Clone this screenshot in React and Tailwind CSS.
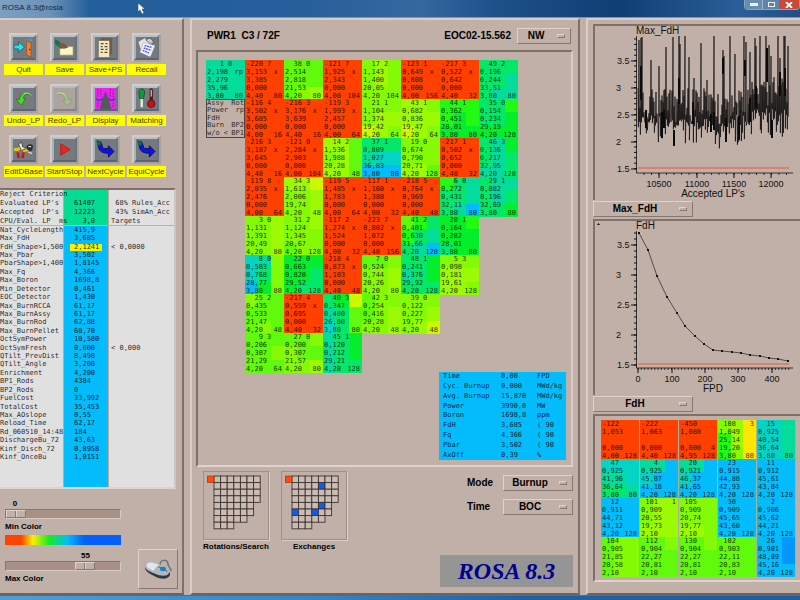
import React, { useState } from 'react';
import clsx from 'clsx';

// Colour scale of the core maps, hot to cold
const SCALE = {
  R: 'bg-[#ff4000]',
  f: 'bg-[#ffe600]',
  y: 'bg-[#ccf800]',
  l: 'bg-[#9cfa04]',
  m: 'bg-[#84fa06]',
  g: 'bg-[#62fa0c]',
  G: 'bg-[#22fa14]',
  e: 'bg-[#04ee2c]',
  E: 'bg-[#04e86a]',
  t: 'bg-[#04dc9c]',
  c: 'bg-[#04d4c4]',
  b: 'bg-[#04bcfc]',
  B: 'bg-[#0498fc]',
};

// [id, rotation, power, flag, FdH, burnup, enrichment, rods, 3x3 colours]
const CORE = [
  [
    ['1', '0', '2,198', 'rp', '2,279', '35,96', '3,80', '80', 't'],
    ['-220', '7', '3,153', 'x', '3,385', '0,000', '4,40', '80', 'R'],
    ['38', '0', '2,514', '', '2,818', '21,53', '4,20', '80', 'gggggggml'],
    ['-121', '7', '1,925', 'x', '2,343', '0,000', '4,00', '104', 'R'],
    ['17', '2', '1,143', '', '1,400', '20,05', '4,20', '104', 'mlmmlmmmm'],
    ['-123', '1', '0,649', 'x', '0,808', '0,000', '4,00', '156', 'R'],
    ['-217', '3', '0,522', 'x', '0,642', '0,000', '4,40', '32', 'R'],
    ['49', '2', '0,196', '', '0,244', '33,51', '3,80', '80', 'EEEEEtEtt'],
  ],
  [
    'legend',
    ['-116', '4', '3,502', 'x', '3,685', '0,000', '4,00', '16', 'R'],
    ['-216', '3', '3,176', 'x', '3,639', '0,000', '4,40', '16', 'R'],
    ['-119', '3', '1,993', 'x', '2,457', '0,000', '4,00', '64', 'R'],
    ['21', '1', '1,104', '', '1,374', '19,42', '4,20', '64', 'mmmmllylm'],
    ['43', '1', '0,682', '', '0,836', '19,47', '4,20', '64', 'llmlllylm'],
    ['44', '1', '0,362', '', '0,451', '28,01', '3,80', '80', 'GGGGeGeee'],
    ['35', '0', '0,154', '', '0,234', '29,19', '4,20', '128', 'EEGEEeeee'],
  ],
  [
    null,
    ['-216', '3', '3,187', 'x', '3,645', '0,000', '4,40', '16', 'R'],
    ['-121', '0', '2,284', 'x', '2,903', '0,000', '4,00', '104', 'R'],
    ['14', '2', '1,536', '', '1,988', '20,28', '4,20', '48', 'llgmlgllg'],
    ['37', '1', '0,809', '', '1,027', '36,83', '3,80', '80', 'EEEtccbbb'],
    ['19', '0', '0,674', '', '0,790', '20,71', '4,20', '128', 'mmmmmmllg'],
    ['-217', '1', '0,502', 'x', '0,652', '0,000', '4,40', '32', 'R'],
    ['46', '3', '0,136', '', '0,217', '32,95', '4,20', '128', 'EteEtEttE'],
  ],
  [
    null,
    ['-119', '8', '2,035', 'x', '2,476', '0,000', '4,00', '64', 'R'],
    ['34', '3', '1,613', '', '2,006', '19,74', '4,20', '48', 'llymmlmml'],
    ['-119', '5', '1,485', 'x', '1,783', '0,000', '4,00', '64', 'R'],
    ['-117', '1', '1,160', 'x', '1,380', '0,000', '4,00', '32', 'R'],
    ['-218', '5', '0,764', 'x', '0,969', '0,000', '4,40', '48', 'R'],
    ['6', '0', '0,272', '', '0,431', '32,11', '3,80', '80', 'GEtEEtEtb'],
    ['29', '1', '0,082', '', '0,196', '32,69', '3,80', '80', 'EttEtEEEe'],
  ],
  [
    null,
    ['3', '0', '1,131', '', '1,391', '20,49', '4,20', '80', 'mmlmmlmml'],
    ['31', '2', '1,124', '', '1,345', '20,67', '4,20', '128', 'mmlmmmgmm'],
    ['-117', '2', '1,274', 'x', '1,524', '0,000', '4,00', '32', 'R'],
    ['-223', '7', '0,802', 'x', '1,072', '0,000', '4,40', '156', 'R'],
    ['41', '2', '0,401', '', '0,630', '31,66', '4,20', '128', 'gGEGEtEtb'],
    ['28', '1', '0,164', '', '0,282', '28,01', '3,80', '80', 'eeGeeeEee'],
  ],
  [
    null,
    ['8', '0', '0,503', '', '0,768', '28,77', '3,80', '80', 'ctmcEmbem'],
    ['22', '0', '0,663', '', '0,820', '29,52', '4,20', '128', 'eeeeeEeEE'],
    ['-218', '4', '0,873', 'x', '1,103', '0,000', '4,40', '48', 'R'],
    ['7', '0', '0,524', '', '0,744', '20,26', '4,20', '80', 'ggmmmlmml'],
    ['48', '1', '0,241', '', '0,376', '29,92', '4,20', '128', 'EEetEeEEE'],
    ['5', '3', '0,098', '', '0,181', '19,61', '4,20', '128', 'mmmlllllm'],
  ],
  [
    null,
    ['25', '2', '0,435', '', '0,533', '21,47', '4,20', '48', 'mggggggmg'],
    ['-217', '4', '0,559', 'x', '0,695', '0,000', '4,40', '32', 'R'],
    ['40', '3', '0,347', '', '0,480', '26,80', '3,80', '80', 'EeytEgcEg'],
    ['42', '3', '0,254', '', '0,416', '20,28', '4,20', '48', 'gmmgmlmml'],
    ['39', '0', '0,122', '', '0,227', '19,77', '4,20', '48', 'mmmmmlmly'],
  ],
  [
    null,
    ['9', '3', '0,206', '', '0,307', '21,29', '4,20', '64', 'gggggmggg'],
    ['27', '0', '0,200', '', '0,307', '21,57', '4,20', '80', 'ggmmggmml'],
    ['45', '1', '0,120', '', '0,212', '29,21', '4,20', '128', 'tEetEetEE'],
  ],
];

// rows of text: left part and right part of every line, then the colours
const POOL = [
  [['-122', ''], ['1,053', ''], ['', ''], ['0,000', ''], ['4,00', '128'], 'R'],
  [['-222', ''], ['1,063', ''], ['', ''], ['0,000', ''], ['4,40', '128'], 'R'],
  [['-450', ''], ['1,080', ''], ['', ''], ['0,000', '4'], ['4,95', '128'], 'R'],
  [[' 108', '3'], ['1,049', ''], ['25,14', ''], ['19,20', ''], ['3,80', '80'], 'mlfGlfGmf'],
  [['  15', ''], ['0,925', ''], ['40,54', ''], ['36,64', ''], ['3,80', '80'], 'cctcctcct'],
  [['  47', ''], ['0,925', ''], ['41,96', ''], ['36,64', ''], ['3,80', '80'], 'cccttcEEt'],
  [['   4', ''], ['0,925', ''], ['45,07', ''], ['41,18', ''], ['4,20', '128'], 'ttbcbbbbb'],
  [['  20', ''], ['0,921', ''], ['46,37', ''], ['41,65', ''], ['4,20', '128'], 'ttbcbbbbb'],
  [['  23', ''], ['0,915', ''], ['44,88', ''], ['42,93', ''], ['4,20', '128'], 'b'],
  [['  11', ''], ['0,912', ''], ['45,61', ''], ['43,04', ''], ['4,20', '128'], 'b'],
  [['  12', ''], ['0,911', ''], ['44,71', ''], ['43,12', ''], ['4,20', '128'], 'b'],
  [[' 101', '1'], ['0,909', ''], ['20,55', ''], ['19,73', ''], ['2,10', ''], 'mllmlllll'],
  [[' 105', ''], ['0,909', ''], ['20,74', ''], ['19,77', ''], ['2,10', ''], 'mmmmmmllm'],
  [['  30', ''], ['0,909', ''], ['45,65', ''], ['43,60', ''], ['4,20', '128'], 'b'],
  [['   2', ''], ['0,906', ''], ['45,62', ''], ['44,21', ''], ['4,20', '128'], 'b'],
  [[' 104', ''], ['0,905', ''], ['21,85', ''], ['20,58', ''], ['2,10', ''], 'gmmgmmgmm'],
  [[' 112', ''], ['0,904', ''], ['22,27', ''], ['20,81', ''], ['2,10', ''], 'ggmgggggg'],
  [[' 130', ''], ['0,904', ''], ['22,27', ''], ['20,81', ''], ['2,10', ''], 'ggmgggggg'],
  [[' 102', ''], ['0,903', ''], ['22,11', ''], ['20,83', ''], ['2,10', ''], 'ggggggggg'],
  [['  26', ''], ['0,901', ''], ['48,09', ''], ['45,16', ''], ['4,20', '128'], 'bbBbbBbbb'],
];

const HEADER_ROWS = [
  ['Reject Criterion', '', ''],
  ["Evaluated LP's", '61407', ' 68% Rules_Acc'],
  ["Accepted  LP's", '12223', ' 43% SimAn_Acc'],
  ['CPU/Eval. LP  ms', '  3,0', 'Targets'],
];

const PARAMS = [
  ['Nat_CycleLength', '415,9'],
  ['Max_FdH', '3,685'],
  ['FdH_Shape>1,500', '2,1241', '< 0,0000'],
  ['Max_Pbar', '3,502'],
  ['PbarShape>1,400', '1,8145'],
  ['Max_Fq', '4,366'],
  ['Max_Boron', '1698,8'],
  ['Min_Detector', '0,461'],
  ['EOC_Detector', '1,430'],
  ['Max_BurnRCCA', '61,17'],
  ['Max_BurnAssy', '61,17'],
  ['Max_BurnRod', '62,88'],
  ['Max_BurnPellet', '68,70'],
  ['OctSymPower', '10,500'],
  ['OctSymFresh', '0,000', '< 0,000'],
  ['QTilt_PrevDist', '8,498'],
  ['QTilt_Angle', '3,200'],
  ['Enrichment', '4,200'],
  ['BP1_Rods', '4384'],
  ['BP2_Rods', '0'],
  ['FuelCost', '33,992'],
  ['TotalCost', '35,453'],
  ['Max_AOslope', '0,55'],
  ['Reload_Time', '62,17'],
  ['Rd_060510_14:48', '184'],
  ['DischargeBu_72', '43,63'],
  ['Kinf_Disch_72', '0,8958'],
  ['Kinf_OnceBu', '1,0151'],
];

const STATE = [
  ['Time', '0,00', 'FPD'],
  ['Cyc. Burnup', '0,000', 'MWd/kg'],
  ['Avg. Burnup', '15,870', 'MWd/kg'],
  ['Power', '3990,0', 'MW'],
  ['Boron', '1698,8', 'ppm'],
  ['FdH', '3,685', '( 90'],
  ['Fq', '4,366', '( 90'],
  ['Pbar', '3,502', '( 90'],
  ['AxOff', '0,39', '%'],
];

const RAISED = 'border border-t-[#ddd2cc] border-l-[#ddd2cc] border-b-[#85766f] border-r-[#85766f]';
const SUNKEN = 'border-t-2 border-l-2 border-t-[#7f706a] border-l-[#7f706a]';
const MONO = "font-['DejaVu_Sans_Mono',monospace] text-[7px]";

/* ---------- toolbar icons ---------- */

const Quit = () => (
  <>
    <path d="M13 2l7-1v19l-7 1z" fill="#6d87a0" />
    <path d="M14 4l5 2v15l-5-2z" fill="#e8833a" stroke="#8a4413" strokeWidth=".7" />
    <circle cx="17.5" cy="13" r=".8" fill="#4a2204" />
    <path d="M1 8.500h5V5l6 5.500-6 5.500v-3.500H1z" fill="#2fe0e6" stroke="#0b5c66" strokeWidth=".8" />
  </>
);
const Save = () => (
  <>
    <path d="M6 12h5l1-2h8v9H6z" fill="#fbf7c4" stroke="#8d8652" strokeWidth=".6" />
    <path d="M1 2l5 3 4 4-3 3-6-5z" fill="#17734a" />
    <path d="M6 6l5 1 4 4-3 1-3-1-4 0z" fill="#7a564a" />
  </>
);
const SavePS = () => (
  <>
    <path d="M4 4l3-3h11v16l-3 4H4z" fill="#6d5d47" />
    <path d="M4 4h11v17H4z" fill="#f3e9bd" />
    <path d="M6 7h3M11 7h2M6 10h2M10 10h3M6 13h3M11 13h2M6 16h2M10 16h3" stroke="#4c4536" strokeWidth="1.300" />
  </>
);
const Recall = () => (
  <>
    <path d="M2 5l7-4 9 3-2 6-11 4z" fill="#e3e3e8" stroke="#555" strokeWidth=".5" />
    <path d="M10 3l5-2 4 5-4 1z" fill="#c8ccd4" stroke="#333" strokeWidth=".6" />
    <path d="M8 6l12 3-5 12-11-5z" fill="#f6f6ff" stroke="#888" strokeWidth=".4" />
    <path d="M9 9l8 2M8 11.500l8 2.500M7 14l7 3" stroke="#4b4bf0" strokeWidth="1.500" strokeDasharray="2 .7" />
  </>
);
const Undo = () => (
  <>
    <path d="M19 8c-5-5-12-3-12 4h-4l6 6 4-7h-2c0-4 4-6 8-3z" fill="#49d82c" stroke="#1d6d12" strokeWidth=".7" />
    <path d="M19 8c-2-3-6-3-8-2" stroke="#c9f6bc" fill="none" />
  </>
);
const Redo = () => (
  <>
    <path d="M3 6c5-4 12-1 12 6h4l-5 7-5-6h3c0-4-4-7-9-7z" fill="#8fca7c" stroke="#5e8c50" strokeWidth=".7" />
    <path d="M3 6c3-2 7-1 9 1" stroke="#d6ebcd" fill="none" />
  </>
);
const Curtain = () => (
  <>
    <path d="M0 0h22v22H0z" fill="#ee22ee" />
    <path d="M11 3l3 8 3 11H5l3-11z" fill="#55585c" />
    <path d="M1 11c3 3 5 2 7 0M21 11c-3 3-5 2-7 0" stroke="#2747a8" strokeWidth="1.500" fill="none" />
    <path d="M3 1v9M6 2v7M16 1v8M19 2v8M3 15v6M19 15v6" stroke="#8d0f9b" strokeWidth=".9" strokeDasharray="2 1" />
  </>
);
const Matching = () => (
  <>
    <path d="M6 9v10" stroke="#dfe9e4" strokeWidth="2.500" strokeLinecap="round" />
    <path d="M3 4c0-4 6-4 6 0 0 3-1 5-1 7H4c0-2-1-4-1-7z" fill="#0f9a3c" stroke="#063f18" strokeWidth=".7" />
    <path d="M16 2v12" stroke="#4e1f22" strokeWidth="3.500" strokeLinecap="round" />
    <path d="M16 2v7" stroke="#c8ccd0" strokeWidth="1.200" />
    <circle cx="16" cy="16.500" r="4" fill="#c4101c" stroke="#4e0808" strokeWidth=".7" />
  </>
);
const EditBase = () => (
  <>
    <path d="M1 11h4l3-2 4 3 5-1" stroke="#e3c21c" strokeWidth="3" fill="none" />
    <path d="M6 6l3-3 1 5 4 2-5 2z" fill="#e8e8e8" stroke="#222" strokeWidth=".7" />
    <path d="M14 8c2-3 5-3 7-1l-1 5c-3 1-5 0-6-4z" fill="#2a2a2c" />
    <path d="M16 8l3 0M16 14l4 1" stroke="#d9dde0" strokeWidth="1.300" />
    <path d="M5 14l1 6M11 14l-1 6" stroke="#d41216" strokeWidth="2.800" />
  </>
);
const StartStop = () => <path d="M7 5l10 6-10 6z" fill="#f3211b" stroke="#a30d0a" strokeWidth=".6" />;
const Cycle = () => (
  <>
    <path d="M2 2l4 1c2 3 1 5 3 7h5V7l6 6-6 6v-4c-6 0-9-2-10-5z" fill="#1212dd" stroke="#06065e" strokeWidth=".8" />
    <path d="M2 1l5 3-2 3-3-1z" fill="#0f6b4c" />
  </>
);

const TOOLS = [
  ['Quit', Quit],
  ['Save', Save],
  ['Save+PS', SavePS],
  ['Recall', Recall],
  ['Undo_LP', Undo],
  ['Redo_LP', Redo, true],
  ['Display', Curtain],
  ['Matching', Matching],
  ['EditDBase', EditBase],
  ['Start/Stop', StartStop],
  ['NextCycle', Cycle],
  ['EquiCycle', Cycle],
];

const Tool = ({ label, icon: Icon, faded }) => (
  <button type="button" className="flex flex-col items-center gap-0.5">
    <span className="border-2 border-t-[#d3ccc9] border-l-[#d3ccc9] border-b-[#aaa19e] border-r-[#aaa19e]">
      <span
        className={clsx(
          'block border-2 border-t-[#b3c2cd] border-l-[#a3b3bf] border-b-[#576672] border-r-[#667581]',
          faded ? 'bg-[#a39b97] opacity-60' : 'bg-[#777a7c]'
        )}
      >
        <svg width="21" height="21" viewBox="0 0 22 22" className="block">
          <Icon />
        </svg>
      </span>
    </span>
    <span className="flex h-[11px] w-full items-center justify-center bg-[#ffff00] text-[8px] leading-none whitespace-nowrap text-[#3c3c00]">
      {label}
    </span>
  </button>
);

/* ---------- small controls ---------- */

const OptionMenu = ({ id, label, options, className }) => (
  <div className={clsx('relative', className)}>
    <select
      id={id}
      aria-label={label}
      className={clsx(
        'block h-4 w-full appearance-none bg-[#c1b0a8] pr-4 text-center text-[10px] leading-none font-bold text-black outline-none',
        RAISED
      )}
    >
      {options.map((o) => (
        <option key={o}>{o}</option>
      ))}
    </select>
    <span className={clsx('pointer-events-none absolute top-1.5 right-1.5 h-1 w-2', RAISED)} />
  </div>
);

const ColorSlider = ({ id, label, start, max }) => {
  const [value, setValue] = useState(start);
  return (
    <div className="text-[8px] leading-[9px] font-bold text-black">
      <output
        htmlFor={id}
        className="block w-5 text-center"
        style={{ marginLeft: `calc((100% - 20px) * ${value / max})` }}
      >
        {value}
      </output>
      <input
        id={id}
        type="range"
        min="0"
        max={max}
        value={value}
        onChange={(e) => setValue(Number(e.target.value))}
        className="my-px block h-2.5 w-full appearance-none border border-t-[#85766f] border-l-[#85766f] border-b-[#d5cac4] border-r-[#d5cac4] bg-[#a99087] [&::-webkit-slider-thumb]:h-2 [&::-webkit-slider-thumb]:w-5 [&::-webkit-slider-thumb]:appearance-none [&::-webkit-slider-thumb]:border [&::-webkit-slider-thumb]:border-t-[#ddd2cc] [&::-webkit-slider-thumb]:border-l-[#ddd2cc] [&::-webkit-slider-thumb]:border-b-[#85766f] [&::-webkit-slider-thumb]:border-r-[#85766f] [&::-webkit-slider-thumb]:bg-[linear-gradient(90deg,#c1b0a8_45%,#85766f_45%,#85766f_50%,#ddd2cc_50%,#ddd2cc_56%,#c1b0a8_56%)]"
      />
      <label htmlFor={id} className="block pt-0.5">
        {label}
      </label>
    </div>
  );
};

/* ---------- core map ---------- */

// Text over a 3x3 patch of colours
const Assembly = ({ lines, colors, bordered }) => {
  const patches = colors.length === 1 ? colors.repeat(9) : colors;
  return (
    <div className={clsx('grid size-[39px]', bordered && 'border-r border-b border-[#a8b49a]')}>
      <div className="col-start-1 row-start-1 grid grid-cols-3 grid-rows-3">
        {[...patches].map((p, i) => (
          <span key={i} className={SCALE[p]} />
        ))}
      </div>
      <div className={clsx('col-start-1 row-start-1 grid grid-rows-5 pr-0.5 pl-px leading-[8px] whitespace-pre text-black/80', MONO)}>
        {lines.map(([left, right], i) => (
          <div key={i} className="flex justify-between">
            <span>{left}</span>
            <span>{right}</span>
          </div>
        ))}
      </div>
    </div>
  );
};

const Legend = () => (
  <div className={clsx('grid size-[39px] grid-rows-5 border border-[#4d443f] leading-[7px] text-black/80', MONO)}>
    {[['Assy', 'Rot'], ['Power', 'rp'], ['FdH', ''], ['Burn', 'BP2'], ['w/o <', 'BP1']].map(([a, b]) => (
      <div key={a} className="flex justify-between">
        <span>{a}</span>
        <span>{b}</span>
      </div>
    ))}
  </div>
);

const CoreMap = () => (
  <div>
    {CORE.map((row, r) => (
      <div key={r} className="flex">
        {row.map((cell, c) => {
          if (!cell) return <div key={c} className="size-[39px]" />;
          if (cell === 'legend') return <Legend key={c} />;
          const [id, rot, power, flag, fdh, burn, enr, rods, colors] = cell;
          const lines = [
            [`${id.padStart(4)} ${rot}`, ''],
            [power, flag === 'x' ? 'x ' : flag],
            [fdh, ''],
            [burn, ''],
            [enr, rods],
          ];
          return <Assembly key={c} lines={lines} colors={colors} />;
        })}
      </div>
    ))}
  </div>
);

const MINI_ROWS = [7, 7, 7, 7, 6, 6, 5, 3];

const MiniCore = ({ label, marks = [] }) => (
  <button type="button" className="flex w-[66px] flex-col items-center gap-0.5">
    <span className="block border border-[#a09088] shadow-[1px_1px_0_#d8cdc7]">
      <svg width="64" height="67" viewBox="0 0 64 67" className="block">
        {MINI_ROWS.map((n, r) =>
          Array.from({ length: n }, (_, c) => (
            <rect
              key={`${r}-${c}`}
              x={10 + c * 6.6}
              y={4 + r * 6.6}
              width="6.6"
              height="6.6"
              fill={marks.includes(`${c},${r}`) ? '#0a5cf5' : '#cbbbb3'}
              stroke="#3c3532"
              strokeWidth=".9"
            />
          ))
        )}
        <rect x="3.4" y="4" width="6.6" height="6.6" fill="#ff4a0a" stroke="#8a3010" strokeWidth=".6" />
      </svg>
    </span>
    <span className="text-[8px] leading-[9px] font-bold whitespace-nowrap text-black">{label}</span>
  </button>
);

/* ---------- charts ---------- */

const range = (from, to, step) => {
  const out = [];
  for (let v = from; v <= to; v += step) out.push(v);
  return out;
};

// x position and top of the tall peaks
const PEAKS = {
  44: 14, 46: 12, 47: 11, 56: 34, 64: 40, 71: 21, 78: 11, 84: 10, 85: 18, 90: 10, 94: 31, 99: 52,
  106: 17, 112: 54, 119: 10, 128: 24, 129: 30, 135: 10, 140: 28, 149: 10, 151: 16, 155: 26, 160: 12, 161: 20,
  165: 10, 171: 10, 174: 19, 176: 30, 183: 10, 185: 32, 189: 10, 190: 10, 193: 20,
};

const noisePath = () => {
  let seed = 17;
  const rnd = () => {
    seed = (seed * 16807) % 2147483647;
    return seed / 2147483647;
  };
  let d = '';
  for (let x = 43; x <= 193; x += 1) {
    const late = x > 153 ? 14 : 0;
    const top = PEAKS[x] ?? 62 + rnd() * 36 - late;
    const bottom = 88 + rnd() * rnd() * 34 + rnd() * 8 - late / 2;
    d += `${d ? 'L' : 'M'}${x} ${top.toFixed(1)}L${(x + 0.4).toFixed(1)} ${bottom.toFixed(1)}`;
  }
  return d;
};

const Chart = ({ title, xTitle, axisTop, axisBottom, yTicks, xTicks, minorY, minorX, limit, captionY, children }) => (
  <svg width="205" height="174" viewBox="0 0 205 174" className="block font-['Liberation_Sans',Arial,sans-serif]" fill="#111">
    <text x="41" y={captionY} fontSize="10">{title}</text>
    <g stroke="#111" strokeWidth="1">
      <path d={`M41.500 ${axisTop}V${axisBottom}H198`} fill="none" strokeWidth=".8" />
      {minorY.map((y) => (
        <path key={y} d={`M39 ${y}h3`} />
      ))}
      {yTicks.map(([y]) => (
        <path key={y} d={`M36 ${y}h6`} />
      ))}
      {minorX.map((x) => (
        <path key={x} d={`M${x} ${axisBottom}v2`} strokeWidth=".8" />
      ))}
      {xTicks.map(([x]) => (
        <path key={x} d={`M${x} ${axisBottom}v5`} />
      ))}
    </g>
    {yTicks.map(([y, label]) => (
      <text key={label} x={label.length > 1 ? 22 : 21} y={y + 3} fontSize="9">{label}</text>
    ))}
    {xTicks.map(([x, label]) => (
      <text key={label} x={x} y={axisBottom + 14} fontSize="9" textAnchor="middle">{label}</text>
    ))}
    <text x="118" y={axisBottom + 24} fontSize="10" textAnchor="middle">{xTitle}</text>
    <path d={`M43 ${limit}H194`} stroke="#e0735a" strokeWidth="1.500" />
    {children}
  </svg>
);

const FDH_POINTS = [
  [44, 12], [53, 29], [62, 55], [72, 76], [82, 92], [90, 105], [100, 115], [109, 123], [118, 129],
  [127, 130], [137, 131], [146, 132], [155, 134], [165, 135], [174, 137], [183, 138], [193, 140],
];

export default function App() {
  return (
    <div className="flex min-h-screen flex-col overflow-hidden bg-[#c1b0a8] font-['Liberation_Sans',Arial,sans-serif]">
      {/* Title bar */}
      <header className="relative flex h-[18px] justify-between border-b border-[#8494a6] bg-[linear-gradient(90deg,#7ba0c2_0,#6c93b8_50px,#235f9c_90px,#275f9b_300px,#34689f_420px,#1d4f88_500px,#0f3e74_620px,#2b5f97_740px,#1d4f88_100%)]">
        <h1 className="pt-[3px] pl-0.5 text-[8px] leading-[10px] text-[#14283c]">ROSA 8.3@rosia</h1>
        <svg width="9" height="12" viewBox="0 0 9 12" className="absolute top-[3px] left-[137px]">
          <path d="M1 0v9l2-2 2 4 2-1-2-4h3z" fill="#fff" stroke="#31506f" strokeWidth=".6" />
        </svg>
        <div className="flex h-2.5 overflow-hidden rounded-b-sm border border-t-0 border-[#8aa3bc]">
          <button type="button" aria-label="Minimize" className="flex w-[17px] items-center justify-center bg-[#6a8cb0]">
            <span className="h-[3px] w-2 bg-[#eef2f6]" />
          </button>
          <button type="button" aria-label="Maximize" className="flex w-[17px] items-center justify-center border-l border-[#a4b7ca] bg-[#5f84aa]">
            <span className="h-[5px] w-[7px] border border-[#eef2f6]" />
          </button>
          <button type="button" aria-label="Close" className="flex w-5 items-center justify-center bg-[#c94a3a]">
            <svg width="8" height="6" viewBox="0 0 8 6">
              <path d="M1 0l6 6M7 0L1 6" stroke="#fff" strokeWidth="1.800" />
            </svg>
          </button>
        </div>
      </header>

      <main className="flex flex-1 gap-1.5">
        {/* Left panel */}
        <section className="flex w-[184px] shrink-0 flex-col border-t-2 border-r-2 border-b-2 border-t-[#d8cdc8] border-r-[#7f706a] border-b-[#6f625c]">
          <div className="mt-[13px] grid grid-cols-[repeat(4,39px)] gap-x-0.5 gap-y-[9px] pl-1">
            {TOOLS.map(([label, icon, faded]) => (
              <Tool key={label} label={label} icon={icon} faded={faded} />
            ))}
          </div>

          <div className="mt-[11px] mr-1.5 border-t-2 border-r-2 border-b-2 border-t-[#7f706a] border-r-[#d0c6c0] border-b-[#ddd2cc]">
            <table className={clsx('h-[297px] w-full table-fixed border-separate border-spacing-0 bg-[#e0e0e0] leading-[7px] whitespace-pre text-black/85', MONO)}>
              <colgroup>
                <col className="w-[63px]" />
                <col className="w-[46px]" />
                <col />
              </colgroup>
              <thead>
                {HEADER_ROWS.map(([name, value, note], i) => (
                  <tr key={name} className={clsx('h-[9px]', i === 3 && '*:border-b *:border-b-[#c1b0a8]')}>
                    <th className="p-0 text-left font-normal">{name}</th>
                    <td className="border-x border-x-[#c1a89c] bg-[#04dc94] p-0 pl-2.5">{value}</td>
                    <td className="p-0 pl-0.5">{note}</td>
                  </tr>
                ))}
              </thead>
              <tbody>
                {PARAMS.map(([name, value, target]) => (
                  <tr key={name}>
                    <th className="p-0 text-left font-normal">{name}</th>
                    <td className="border-x border-x-[#c1a89c] bg-[#04bcfc] p-0 pl-1.5">
                      <span className={clsx('block w-8 pl-1', name === 'FdH_Shape>1,500' && 'bg-[#f4f400]')}>{value}</span>
                    </td>
                    <td className="p-0 pl-0.5">{target}</td>
                  </tr>
                ))}
                <tr className="h-[25px]">
                  <td className="p-0" />
                  <td className="border-x border-x-[#c1a89c] bg-[#04bcfc] p-0" />
                  <td className="p-0" />
                </tr>
              </tbody>
            </table>
          </div>

          <div className="mt-2.5 flex flex-1 justify-between pr-1 pb-1 pl-[5px]">
            <div className="w-[116px]">
              <ColorSlider id="min-color" label="Min Color" start={0} max={75} />
              <div className="mt-1 mb-1.5 h-2.5 bg-[linear-gradient(90deg,#ff4400_0,#ff4400_14%,#ffee00_24%,#11ee22_38%,#04bcfc_54%,#0460fc_68%,#0460fc_100%)]" />
              <ColorSlider id="max-color" label="Max Color" start={55} max={75} />
            </div>
            <button type="button" aria-label="Mouse" className={clsx('flex size-10 items-center justify-center self-end bg-[#c1b0a8]', RAISED)}>
              <svg width="30" height="24" viewBox="0 0 30 24">
                <path d="M17 8c0-6 8-6 8-1 0 3 3 3 3 7" fill="none" stroke="#6b7276" strokeWidth="1.500" />
                <path d="M2 9c2-5 9-4 14-1 6 3 12 6 11 10-2 5-9 4-14 2C7 17 1 14 2 9z" fill="#2f3a40" />
                <path d="M2 8c2-5 9-4 14-1 6 3 12 5 10 9-2 4-9 3-13 1C8 15 1 13 2 8z" fill="#aeb8be" />
                <path d="M4 7c3-3 8-1 12 1-3 2-5 4-5 6-4-2-9-4-7-7z" fill="#e1e6e9" />
                <path d="M15 10c4 0 9 3 9 5" stroke="#4f5a60" fill="none" />
                <ellipse cx="20" cy="12" rx="3" ry="2.200" fill="#1c7fc0" />
              </svg>
            </button>
          </div>
        </section>

        {/* Core panel */}
        <section className="flex flex-1 flex-col border-2 border-t-[#d8cdc8] border-r-[#7f706a] border-b-[#6f625c] border-l-[#d8cdc8] pt-2 pr-[5px] pl-1">
          <div className="flex items-center justify-between pr-0.5 pl-[11px] text-[10px] font-bold text-black">
            <h2 className="leading-none whitespace-pre">{'PWR1  C3 / 72F'}</h2>
            <div className="flex items-center gap-1.5 leading-none">
              <span>EOC02-15.562</span>
              <OptionMenu id="quadrant" label="Quadrant" options={['NW', 'NE', 'SW', 'SE']} className="w-[54px]" />
            </div>
          </div>

          <div className={clsx('mt-1.5 border-r-2 border-b-2 border-r-[#d8cdc8] border-b-[#ddd2cc] pt-2 pr-[5px] pb-[5px] pl-2', SUNKEN)}>
            <CoreMap />
            <table className={clsx('ml-auto h-[88px] w-[127px] border-separate border-spacing-0 bg-[#04bcfc] leading-[7px] text-black/85', MONO)}>
              <tbody>
                {STATE.map(([name, value, unit]) => (
                  <tr key={name}>
                    <th className="w-[62px] p-0 pl-1 text-left font-normal">{name}</th>
                    <td className="w-9 p-0">{value}</td>
                    <td className="p-0">{unit}</td>
                  </tr>
                ))}
              </tbody>
            </table>
          </div>

          <div className="mt-1 flex flex-1 justify-between pb-1.5">
            <div className="flex items-start gap-3 pl-[7px]">
              <MiniCore label="Rotations/Search" />
              <MiniCore label="Exchanges" marks={['4,1', '4,4', '3,5', '0,5']} />
            </div>
            <div className="flex flex-col items-end justify-between pt-1">
              <div className="grid grid-cols-[36px_70px] items-center gap-y-2 text-[10px] leading-none font-bold text-black">
                <label htmlFor="mode">Mode</label>
                <OptionMenu id="mode" options={['Burnup', 'Power']} />
                <label htmlFor="time">Time</label>
                <OptionMenu id="time" options={['BOC', 'EOC']} />
              </div>
              <div className="flex h-8 w-[133px] items-center justify-center bg-[#959595] font-['Liberation_Serif',serif] text-[24px] leading-none font-bold text-[#00008c] italic">
                ROSA 8.3
              </div>
            </div>
          </div>
        </section>

        {/* Charts */}
        <section className="flex w-[214px] shrink-0 flex-col overflow-hidden border-t-2 border-b-2 border-l-2 border-t-[#d8cdc8] border-b-[#6f625c] border-l-[#d8cdc8] pt-1 pl-[5px]">
          <div className={SUNKEN}>
            <Chart
              title="Max_FdH"
              xTitle="Accepted LP's"
              captionY={8}
              axisTop={10}
              axisBottom={147}
              yTicks={[[35, '3.5'], [62, '3'], [89, '2.5'], [116, '2'], [143, '1.5']]}
              xTicks={[[64, '10500'], [102, '11000'], [139, '11500'], [176, '12000']]}
              minorY={range(13, 143, 5.4)}
              minorX={range(49, 196, 7.5)}
              limit={142}
            >
              <path d={noisePath()} fill="none" stroke="#0b0b0b" strokeWidth=".7" />
              {/* dense bundles */}
              <path
                d="M46 40v34M51 84v18M67 86v26M69 84v18M79 104v16M84 52v26M98 76v22M116 88v18M119 86v18M128 32v16M131 92v24M144 90v24M150 34v16M155 72v24M161 60v22M172 22v34M177 94v18M185 46v24M190 42v28"
                stroke="#0b0b0b"
                strokeWidth="2"
              />
            </Chart>
          </div>
          <OptionMenu id="history" label="History parameter" options={['Max_FdH', 'Max_Fq']} className="mt-px w-[100px]" />
          <div className={clsx('mt-0.5', SUNKEN)}>
            <Chart
              title="FdH"
              xTitle="FPD"
              captionY={8}
              axisTop={10}
              axisBottom={147}
              yTicks={[[24, '3.5'], [54, '3'], [84, '2.5'], [114, '2'], [144, '1.5']]}
              xTicks={[[43, '0'], [77, '100'], [110, '200'], [143, '300'], [177, '400']]}
              minorY={range(12, 144, 6)}
              minorX={range(43, 197, 3.35)}
              limit={143}
            >
              <path d={`M${FDH_POINTS.map((p) => p.join(' ')).join('L')}`} fill="none" stroke="#333" strokeWidth=".8" />
              {FDH_POINTS.map(([x, y]) => (
                <rect key={x} x={x - 1} y={y - 1} width="2" height="2" />
              ))}
              <path d="M2 4l1.500-2 1.500 2z" />
            </Chart>
          </div>
          <OptionMenu id="cycle" label="Cycle parameter" options={['FdH', 'Fq']} className="mt-px w-[100px]" />
          <div className={clsx('mt-0.5 border-b-2 border-b-[#ddd2cc] py-1 pl-1.5', SUNKEN)}>
            <div className="grid grid-cols-[repeat(5,39px)]">
              {POOL.map((cell, i) => (
                <Assembly key={i} lines={cell.slice(0, 5)} colors={cell[5]} bordered />
              ))}
            </div>
          </div>
        </section>
      </main>

      <footer className="h-[5px] border-t border-[#5b6b7c] bg-[linear-gradient(90deg,#4aa0dc_0,#2f86cc_40%,#1d62aa_65%,#1d5ea4_100%)]" />
    </div>
  );
}
